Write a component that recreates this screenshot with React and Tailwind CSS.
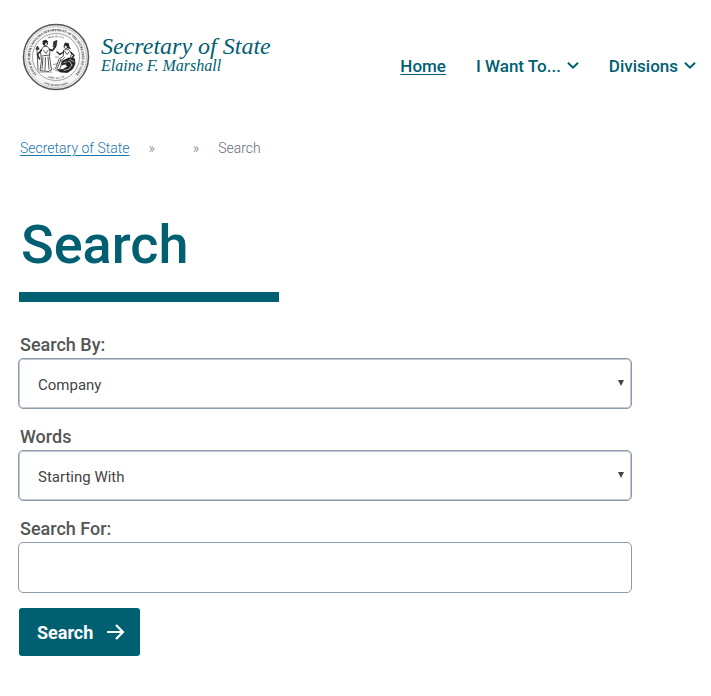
import { useState } from 'react';

const breadcrumbs = [{ label: 'Secretary of State', href: '#' }, { label: '' }, { label: 'Search' }];

const StateSeal = () => (
  <svg viewBox="0 0 136 136" className="h-[68px] w-[68px] shrink-0" role="img" aria-label="State seal">
    <defs>
      <path id="seal-ring" d="M 50 117 A 52 52 0 1 1 86 117" />
      <path id="seal-motto" d="M 28 110 A 58 58 0 0 0 108 110" />
      <path id="seal-top" d="M 38 42 A 40 40 0 0 1 98 42" />
      <path id="seal-bottom" d="M 36 98 A 44 44 0 0 0 100 98" />
    </defs>
    <circle cx="68" cy="68" r="65" fill="#f4f4f4" stroke="#555" strokeWidth="3" />
    <circle cx="68" cy="68" r="61" fill="none" stroke="#999" strokeWidth="1" />
    <circle cx="68" cy="68" r="47" fill="#fff" stroke="#888" strokeWidth="1.5" />
    <g fill="#222" fontFamily="Liberation Serif, serif" fontWeight="700" textAnchor="middle">
      <text fontSize="6.5">
        <textPath href="#seal-ring" startOffset="50%">STATE OF NORTH CAROLINA DEPARTMENT OF THE SECRETARY OF STATE</textPath>
      </text>
      <text fontSize="5">
        <textPath href="#seal-motto" startOffset="50%">ESSE QUAM VIDERI</textPath>
      </text>
      <text fontSize="5">
        <textPath href="#seal-top" startOffset="50%">MAY 20, 1775</textPath>
      </text>
      <text fontSize="5">
        <textPath href="#seal-bottom" startOffset="50%">APRIL 12, 1776</textPath>
      </text>
    </g>
    {/* Liberty, standing with staff and scroll */}
    <g fill="#fff" stroke="#222" strokeWidth="1.5" strokeLinejoin="round" strokeLinecap="round">
      <path d="M44 47 L51 47 L56 54 L55 67 L59 94 L52 97 L36 95 L39 75 L37 57 Z" />
      <circle cx="47" cy="41" r="4" />
      <path d="M42 42 L42 36 L48 34 L52 38 L47 39 L45 44 Z" fill="#222" />
      <path d="M39 54 L31 63 L35 72 M55 53 L61 55 L67 47" fill="none" strokeWidth="3" />
      <path d="M64 37 L70 35 L68 47 L63 48 Z" fill="#333" />
      <path d="M30 50 L32 94" fill="none" />
      <path d="M28 52 L31 46 L34 52 Z" fill="#333" />
      <path d="M40 66 L54 64 M43 55 L48 61 L52 55 M42 69 L40 92 M47 69 L46 94 M52 68 L54 92" fill="none" />
    </g>
    {/* Plenty, seated beside her horn */}
    <g fill="#fff" stroke="#222" strokeWidth="1.5" strokeLinejoin="round" strokeLinecap="round">
      <path d="M84 54 L93 53 L99 60 L97 70 L80 78 L75 94 L67 91 L74 72 L82 67 Z" />
      <circle cx="88" cy="47" r="4" />
      <path d="M85 46 L86 40 L93 41 L94 48 L97 51 L91 50 L89 44 Z" fill="#222" />
      <path d="M83 58 L76 63 L70 58 M98 59 L104 65 L100 70" fill="none" strokeWidth="3" />
      <path d="M86 57 L90 63 L94 58 M78 72 L71 90 M85 69 L77 78" fill="none" />
      <path d="M81 76 L93 70 L105 71 L106 82 L101 92 L91 99 L77 98 L71 94 L82 93 L91 87 L87 82 L80 84 Z" fill="#222" />
      <path d="M92 76 L97 78 L99 84 M84 95 L94 92 L100 84 M96 73 L103 77 M84 79 L89 78" fill="none" stroke="#ddd" />
      <path d="M63 83 L72 81 M62 91 L67 95 L74 96 M33 98 H60 M67 68 L73 68" fill="none" stroke="#777" />
    </g>
  </svg>
);

const Chevron = () => (
  <svg viewBox="0 0 12 8" className="h-2 w-3" fill="none" stroke="currentColor" strokeWidth="2" aria-hidden="true">
    <path d="M1 0.7 L6 5.7 L11 0.7" />
  </svg>
);

const SelectField = ({ id, label, options }) => {
  const [value, setValue] = useState(options[0]);

  return (
    <div className="flex flex-col">
      <label htmlFor={id} className="pl-0.5 text-[18px] leading-6 font-medium">{label}</label>
      <div className="relative mt-px">
        <select
          id={id}
          value={value}
          onChange={(e) => setValue(e.target.value)}
          className="block h-[51px] w-full appearance-none rounded-[5px] border border-[#8c9aaa] bg-white px-[19px] pt-1 text-[15px] text-[#444] shadow-[inset_0_0_0_1px_#c3c9d0]"
        >
          {options.map((option) => (
            <option key={option}>{option}</option>
          ))}
        </select>
        <svg viewBox="0 0 6 6" className="pointer-events-none absolute top-[22px] right-2 h-1.5 w-1.5" aria-hidden="true">
          <path d="M0 0 H6 L3 6 Z" fill="#444" />
        </svg>
      </div>
    </div>
  );
};

const App = () => {
  const [query, setQuery] = useState('');

  return (
    <div className="bg-white font-['Roboto',sans-serif] text-[#555]">
      <header className="flex items-start justify-between pt-[23px] pr-[15px] pl-[22px] text-[#006072]">
        <a href="#" className="flex items-start gap-[11px]">
          <StateSeal />
          <span className="flex flex-col pt-[11px] font-['Liberation_Serif',serif] whitespace-nowrap italic">
            <span className="text-[24px] leading-6">Secretary of State</span>
            <span className="text-[16px] leading-4">Elaine F. Marshall</span>
          </span>
        </a>
        <nav className="flex gap-[30px] pt-[31px] text-[17px] leading-6 font-medium whitespace-nowrap">
          <a href="#" className="underline underline-offset-2">Home</a>
          <button type="button" className="flex items-center gap-1.5">
            I Want To... <Chevron />
          </button>
          <button type="button" className="flex items-center gap-1.5">
            Divisions <Chevron />
          </button>
        </nav>
      </header>

      <main className="pr-[79px] pb-10 pl-[18px]">
        <nav aria-label="Breadcrumb" className="mt-[47px] pl-0.5">
          <ol className="flex text-[14px] leading-5 font-light">
            {breadcrumbs.map((crumb, index) => (
              <li key={index} className="flex">
                {index > 0 && <span className="px-[19px] text-[#777985]">»</span>}
                {crumb.href ? (
                  <a href={crumb.href} className="text-[#1b75ae] underline underline-offset-2">{crumb.label}</a>
                ) : (
                  <span className="text-[#696b77]">{crumb.label}</span>
                )}
              </li>
            ))}
          </ol>
        </nav>

        <h1 className="mt-[55px] pl-[3px] text-[54px] leading-[64px] font-medium text-[#006072]">Search</h1>
        <div className="mt-[15px] ml-px h-2.5 w-[260px] bg-[#006072]" />

        <form className="mt-[31px]" onSubmit={(e) => e.preventDefault()}>
          <div className="flex flex-col gap-4">
            <SelectField id="search-by" label="Search By:" options={['Company', 'Registered Agent', 'Officer']} />
            <SelectField id="words" label="Words" options={['Starting With', 'Any', 'All', 'Exact']} />
            <div className="flex flex-col">
              <label htmlFor="search-for" className="pl-0.5 text-[18px] leading-6 font-medium">Search For:</label>
              <input
                id="search-for"
                type="text"
                value={query}
                onChange={(e) => setQuery(e.target.value)}
                className="mt-px h-[51px] w-full rounded-[5px] border border-[#8c9aaa] bg-white px-[19px] text-[15px]"
              />
            </div>
          </div>
          <button
            type="submit"
            className="mt-[15px] ml-px flex h-12 items-center gap-3.5 rounded-[3px] bg-[#006072] pr-[15px] pl-[18px] text-[18px] font-bold text-white"
          >
            Search
            <svg viewBox="0 0 18 16" className="h-4 w-[18px]" fill="none" stroke="currentColor" strokeWidth="2.2" aria-hidden="true">
              <path d="M0 8 H16 M9 1 L16 8 L9 15" />
            </svg>
          </button>
        </form>
      </main>
    </div>
  );
};

export default App;
